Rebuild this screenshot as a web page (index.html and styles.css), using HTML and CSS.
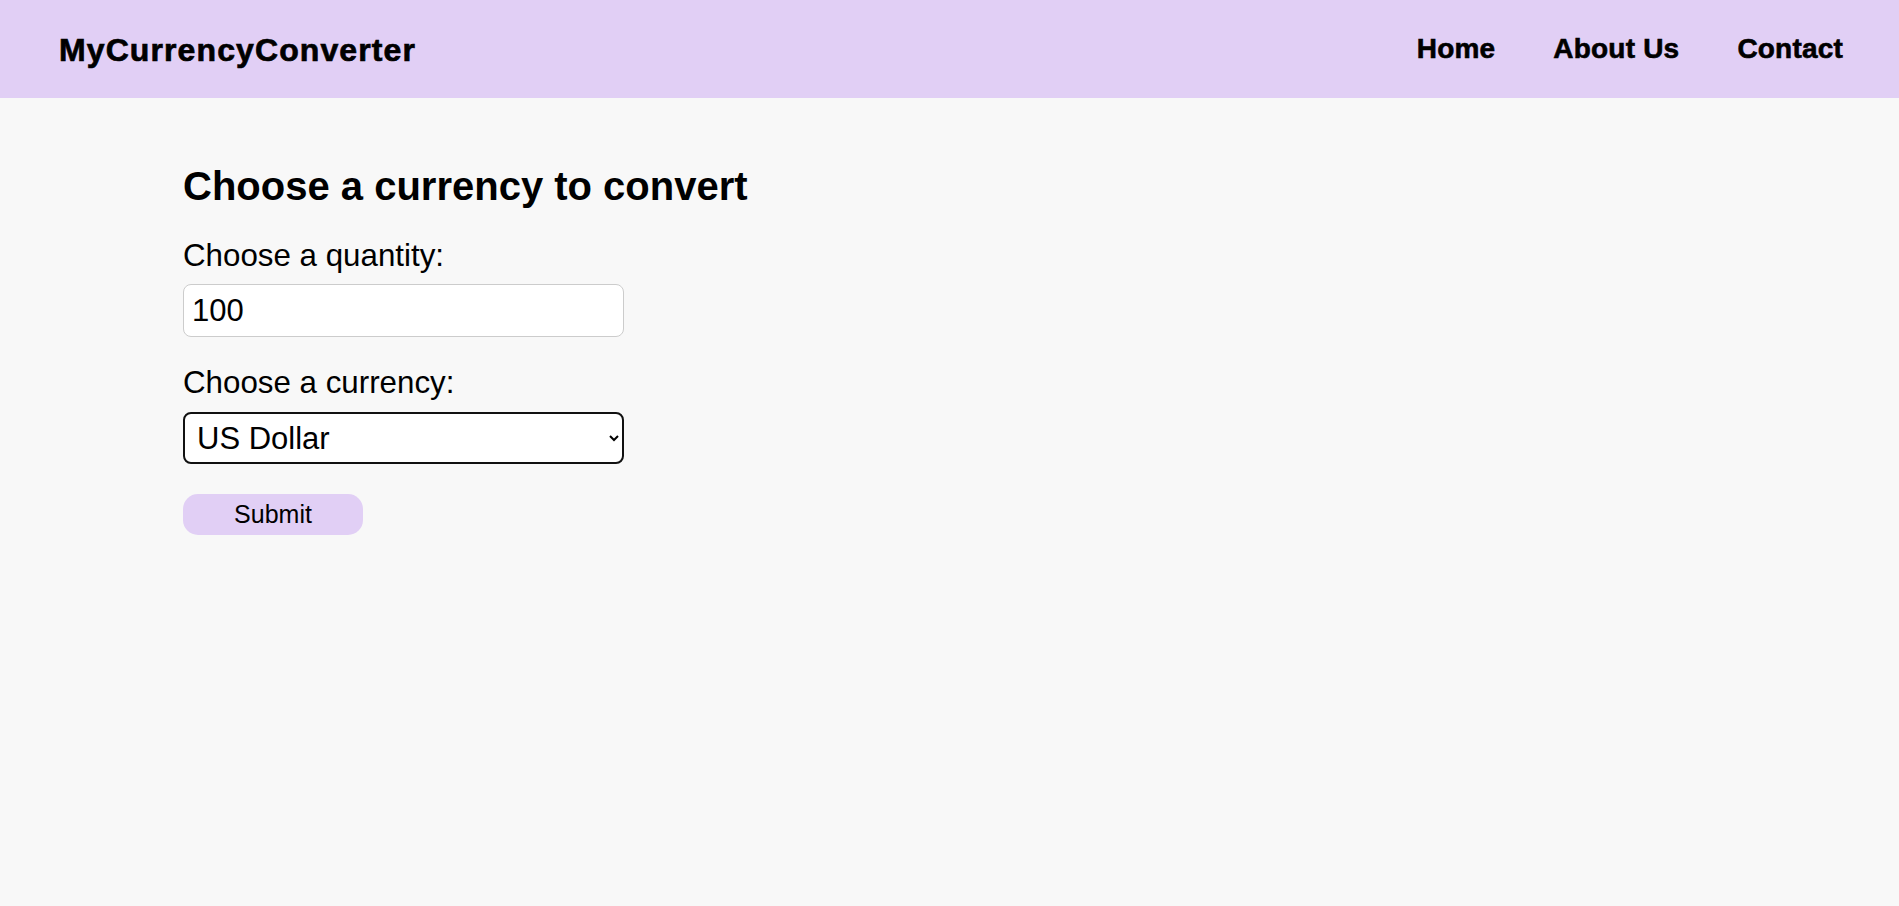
FILE: index.html
```html
<!DOCTYPE html>
<html lang="en">
<head>
<meta charset="utf-8">
<title>MyCurrencyConverter</title>
<link rel="stylesheet" href="styles.css">
</head>
<body>
<header class="topbar">
  <div class="logo">MyCurrencyConverter</div>
  <nav class="nav">
    <a class="nav-link" href="#">Home</a>
    <a class="nav-link" href="#">About Us</a>
    <a class="nav-link" href="#">Contact</a>
  </nav>
</header>
<main class="main">
  <form class="converter">
    <h2 class="title">Choose a currency to convert</h2>
    <label class="field-label" for="qty">Choose a quantity:</label>
    <input class="qty-input" id="qty" type="text" value="100">
    <label class="field-label second" for="cur">Choose a currency:</label>
    <select class="cur-select" id="cur">
      <option>US Dollar</option>
      <option>Euro</option>
      <option>British Pound</option>
    </select>
    <button class="submit-btn" type="button">Submit</button>
  </form>
</main>
</body>
</html>
```

FILE: styles.css
```css
html, body {
  margin: 0;
  padding: 0;
}
body {
  background: #f8f8f8;
  color: #000;
  font-family: "Liberation Sans", Arial, sans-serif;
  min-height: 906px;
}
.topbar {
  height: 98px;
  background: #e1cff5;
  display: flex;
  align-items: center;
  justify-content: space-between;
  padding: 0 56px 0 59px;
}
.logo {
  font-size: 32px;
  font-weight: 700;
  letter-spacing: 1.1px;
  -webkit-text-stroke: 0.7px #000;
  line-height: 36px;
  margin-top: 2px;
}
.nav {
  display: flex;
  gap: 58px;
}
.nav-link {
  font-size: 28px;
  font-weight: 700;
  color: #000;
  text-decoration: none;
  -webkit-text-stroke: 0.6px #000;
  letter-spacing: 0.2px;
  line-height: 32px;
}
.main {
  padding: 65px 183px;
}
.converter {
  display: flex;
  flex-direction: column;
  align-items: flex-start;
}
.title {
  margin: 0;
  font-size: 40px;
  font-weight: 700;
  line-height: 46px;
}
.field-label {
  font-size: 31.3px;
  line-height: 36px;
  margin-top: 29px;
  margin-bottom: -1px;
}
.field-label.second {
  margin-top: 28px;
}
.qty-input {
  box-sizing: border-box;
  margin-top: 11px;
  width: 441px;
  height: 53px;
  border: 1px solid #cccccc;
  border-radius: 8px;
  background: #fff;
  padding: 0 8px;
  font-family: "Liberation Sans", Arial, sans-serif;
  font-size: 31px;
  color: #000;
  outline: none;
}
.cur-select {
  box-sizing: border-box;
  margin-top: 12px;
  width: 441px;
  height: 52px;
  border: 2px solid #111;
  border-radius: 8px;
  background-color: #fff;
  padding: 0 8px;
  font-family: "Liberation Sans", Arial, sans-serif;
  font-size: 31px;
  color: #000;
}
.submit-btn {
  margin-top: 30px;
  width: 180px;
  height: 41px;
  border: none;
  border-radius: 15px;
  background: #e1cff5;
  font-family: "Liberation Sans", Arial, sans-serif;
  font-size: 25px;
  color: #000;
  padding: 0;
}
```
